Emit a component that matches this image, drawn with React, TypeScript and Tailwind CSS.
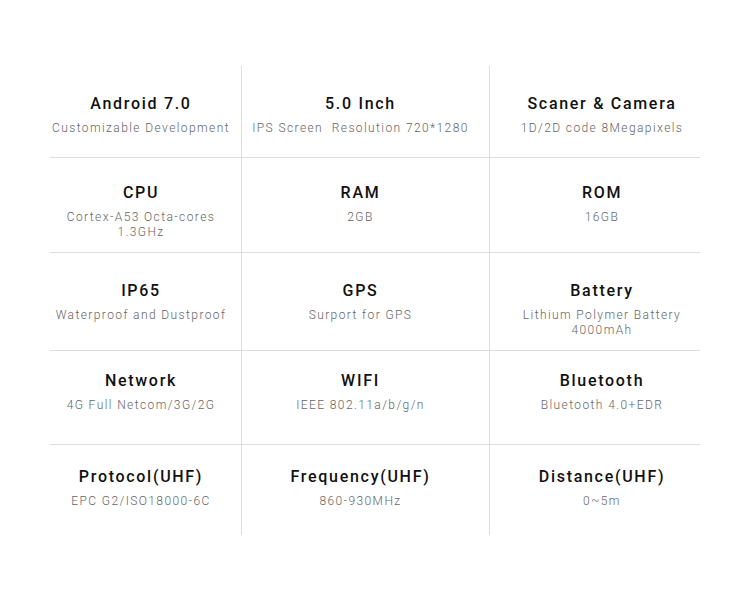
const rows = [
  {
    h: 'h-[92px]',
    pt: 'pt-[28px]',
    cells: [
      { title: 'Android 7.0', sub: ['Customizable Development'] },
      { title: '5.0 Inch', sub: ['IPS Screen\u00a0\u00a0Resolution 720*1280'] },
      { title: 'Scaner & Camera', sub: ['1D/2D code 8Megapixels'] },
    ],
  },
  {
    h: 'h-[95px]',
    pt: 'pt-[25px]',
    cells: [
      { title: 'CPU', sub: ['Cortex-A53 Octa-cores', '1.3GHz'] },
      { title: 'RAM', sub: ['2GB'] },
      { title: 'ROM', sub: ['16GB'] },
    ],
  },
  {
    h: 'h-[98px]',
    pt: 'pt-[28px]',
    cells: [
      { title: 'IP65', sub: ['Waterproof and Dustproof'] },
      { title: 'GPS', sub: ['Surport for GPS'] },
      { title: 'Battery', sub: ['Lithium Polymer Battery', '4000mAh'] },
    ],
  },
  {
    h: 'h-[94px]',
    pt: 'pt-[20px]',
    cells: [
      { title: 'Network', sub: ['4G Full Netcom/3G/2G'] },
      { title: 'WIFI', sub: ['IEEE 802.11a/b/g/n'] },
      { title: 'Bluetooth', sub: ['Bluetooth 4.0+EDR'] },
    ],
  },
  {
    h: 'h-[90px]',
    pt: 'pt-[22px]',
    cells: [
      { title: 'Protocol(UHF)', sub: ['EPC G2/ISO18000-6C'] },
      { title: 'Frequency(UHF)', sub: ['860-930MHz'] },
      { title: 'Distance(UHF)', sub: ['0~5m'] },
    ],
  },
]

const colClass = [
  'w-[191px] pr-[9px]',
  'w-[248px] border-l border-[#dddddd] pr-[10px]',
  'w-[211px] border-l border-[#dddddd] pl-[14px]',
]

export default function App() {
  return (
    <div
      className="w-[750px] h-[600px] bg-white pt-[66px] pl-[50px]"
      style={{ fontFamily: 'Roboto, "Liberation Sans", sans-serif' }}
    >
      <div className="w-[650px] flex flex-col">
        {rows.map((row, i) => (
          <div
            key={i}
            className={`flex ${row.h} ${i < rows.length - 1 ? 'border-b border-[#dddddd]' : ''}`}
          >
            {row.cells.map((cell, j) => (
              <div key={j} className={`${colClass[j]} ${row.pt} flex flex-col items-center text-center`}>
                <p className="text-[16px] leading-[20px] font-medium tracking-[1.7px] text-[#111111]">
                  {cell.title}
                </p>
                <div className="mt-[7px] text-[12px] leading-[15px] font-light tracking-[1.4px] text-[#666666]">
                  {cell.sub.map((s, k) => (
                    <p key={k}>{s}</p>
                  ))}
                </div>
              </div>
            ))}
          </div>
        ))}
      </div>
    </div>
  )
}
